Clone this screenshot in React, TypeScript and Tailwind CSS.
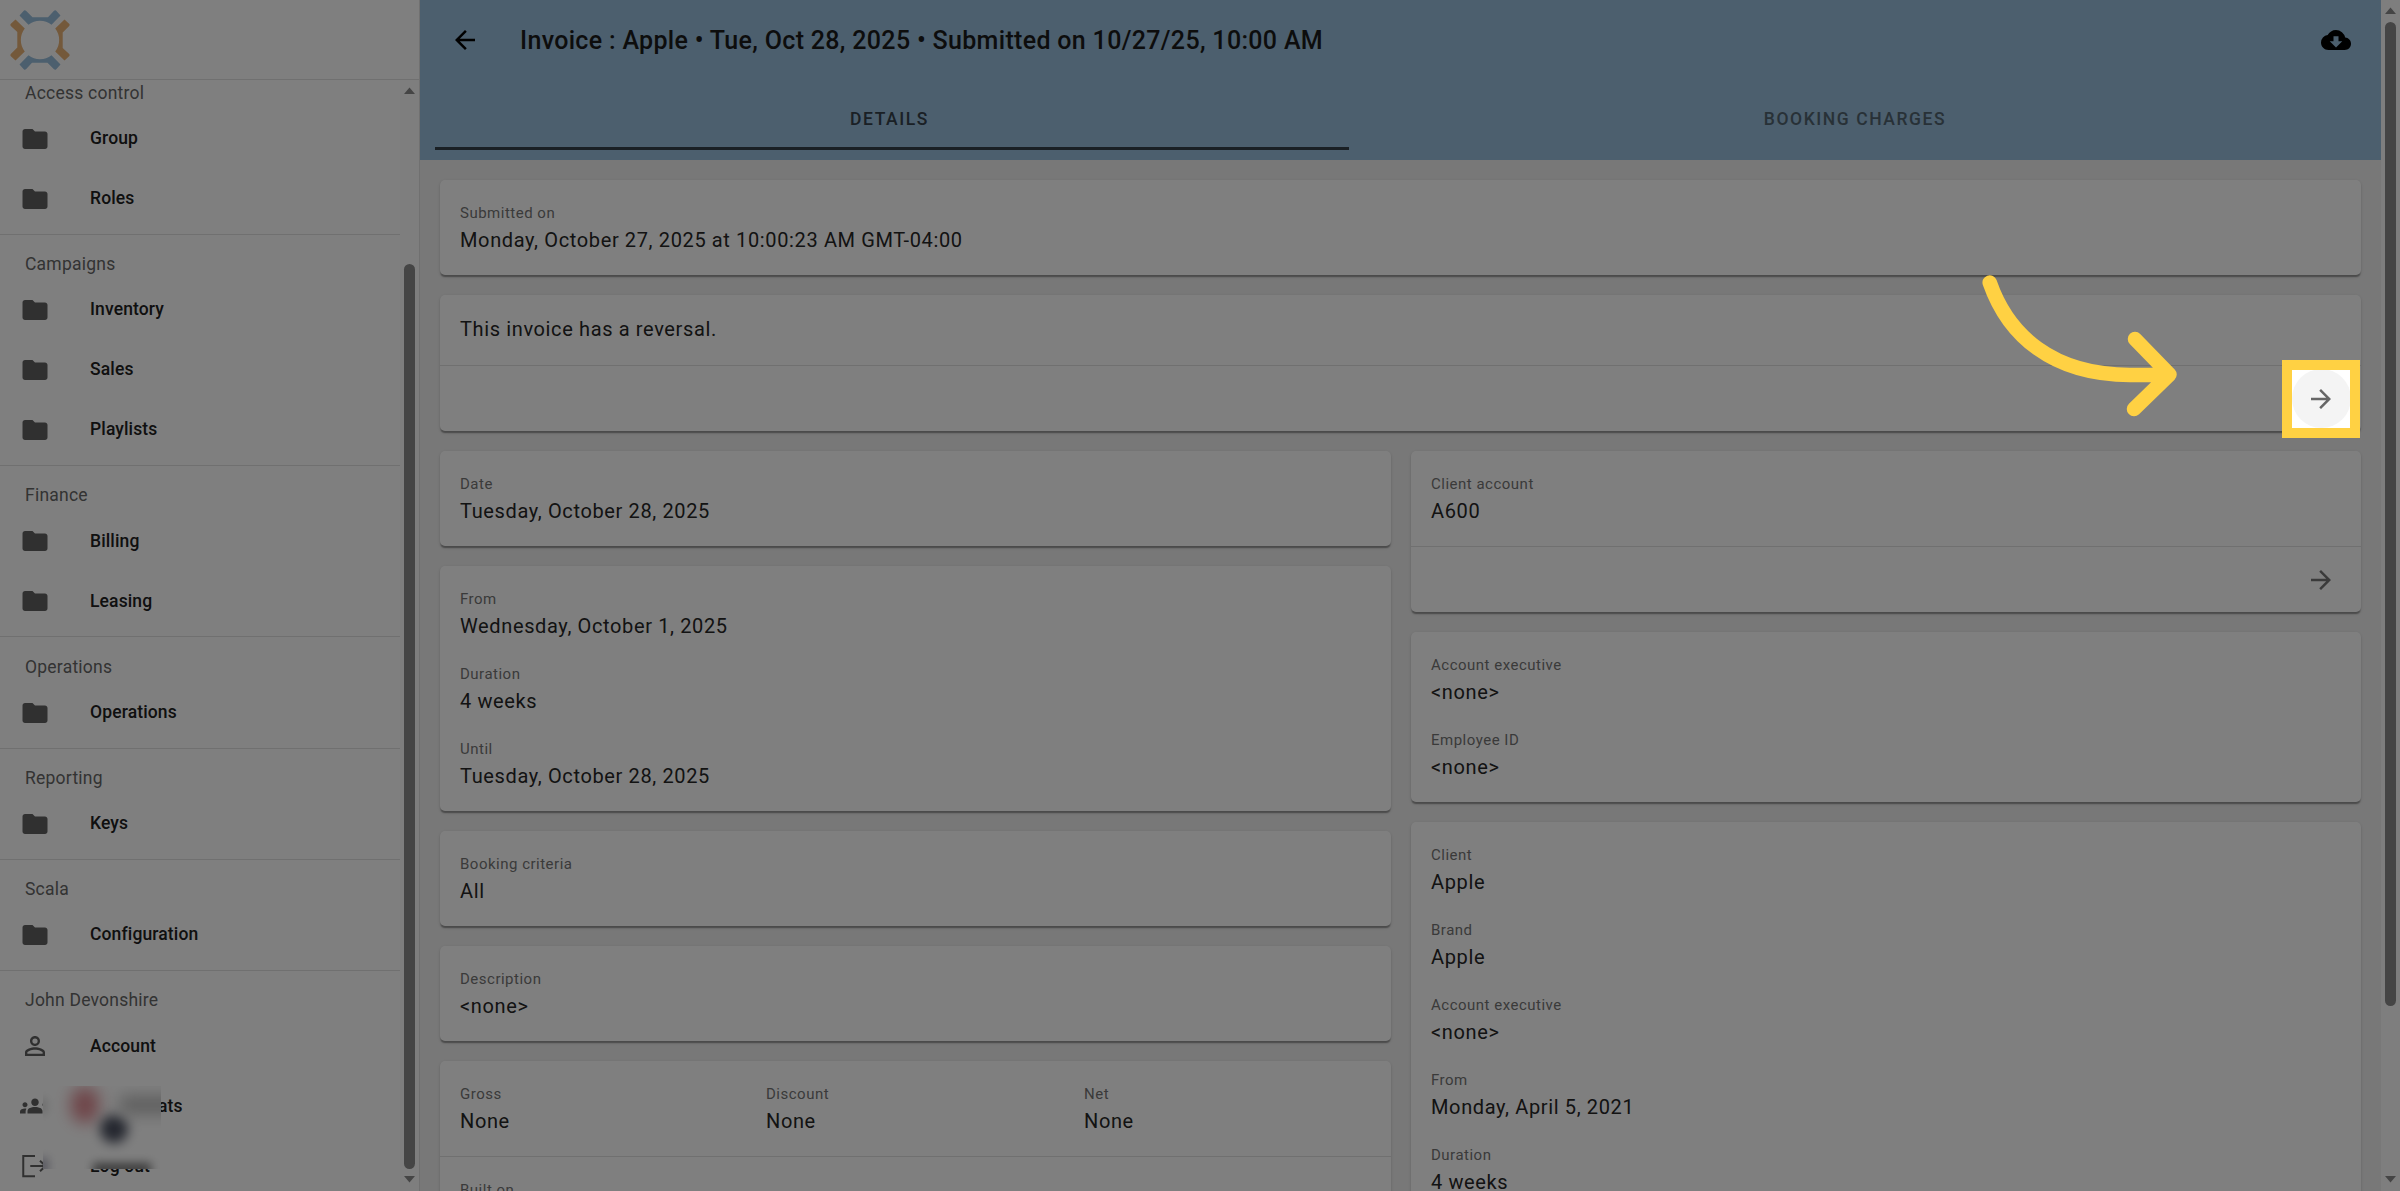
import React from "react";
import { MdFolder, MdArrowBack, MdArrowForward, MdCloudDownload, MdGroups, MdPersonOutline } from "react-icons/md";

const label = "pt-px text-[15px] leading-[25px] tracking-[0.5px] text-[#757575]";
const value = "text-[20px] leading-[30px] tracking-[0.63px] text-[#262626]";

function Field({ name, children, className = "" }: { name: string; children: React.ReactNode; className?: string }) {
  return (
    <div className={`h-[55px] whitespace-nowrap ${className}`}>
      <div className={label}>{name}</div>
      <div className={`-mt-px ${value}`}>{children}</div>
    </div>
  );
}

function Card({ children, className = "" }: { children: React.ReactNode; className?: string }) {
  return (
    <div
      className={`shrink-0 rounded-[5px] bg-white shadow-[0_2.5px_1.25px_-1.25px_rgba(0,0,0,0.2),0_1.25px_1.25px_rgba(0,0,0,0.14),0_1.25px_3.75px_rgba(0,0,0,0.12)] ${className}`}
    >
      {children}
    </div>
  );
}

function Fields({ items, className = "" }: { items: [string, string][]; className?: string }) {
  return (
    <div className={`flex flex-col gap-5 px-5 pt-5 pb-5 ${className}`}>
      {items.map(([n, v], i) => (
        <Field key={i} name={n}>{v}</Field>
      ))}
    </div>
  );
}

function itemIcon(t: string) {
  if (t === "Account") return <MdPersonOutline size={30} />;
  if (t === "Log out") return <LogoutIcon />;
  if (t === "ats") return <MdGroups size={30} />;
  return <MdFolder size={30} />;
}

function Section({ title, items, last = false }: { title: string; items: string[]; last?: boolean }) {
  return (
    <div className={last ? "pt-[14.25px]" : "border-b border-[#e0e0e0] pt-[14.25px] pb-[5.5px]"}>
      <div className="h-[30.5px] pl-[25px] text-[17.5px] leading-[30px] tracking-[0.23px] text-[#666]">{title}</div>
      {items.map((t) => (
        <div key={t} className="flex h-[60px] items-center pl-5 text-[17.5px] font-medium tracking-[0.13px] text-[#212121]">
          <span className="flex w-[70px] shrink-0 pt-px text-[#616161]">{itemIcon(t)}</span>
          <span className={t === "ats" ? "pl-[68px]" : ""}>{t}</span>
        </div>
      ))}
    </div>
  );
}

function LogoutIcon() {
  return (
    <svg width="30" height="30" viewBox="0 0 24 24" fill="none" stroke="currentColor" strokeWidth="1.6">
      <path d="M12 3.900H2.600v16.200H12M8.200 12h12M16 7.800l4.500 4.200-4.500 4.200" />
    </svg>
  );
}

const arm = "M9.500 5.500 14 .6Q15 0 16 .8L22.500 7.300H38L44 .8Q45 0 46 .6L50.500 5.500 41.500 14.800A18.700 18.700 0 0 0 18.500 14.800Z";

function Logo() {
  return (
    <svg className="ml-[10px] mt-[10px]" width="60" height="60" viewBox="0 0 60 60">
      <path d={arm} fill="#98bedc" />
      <path d={arm} fill="#98bedc" transform="rotate(180 30 30)" />
      <path d={arm} fill="#e9b377" transform="rotate(90 30 30)" />
      <path d={arm} fill="#e9b377" transform="rotate(270 30 30)" />
    </svg>
  );
}

function Triangle({ down = false }: { down?: boolean }) {
  return (
    <svg width="11" height="7" viewBox="0 0 11 7" fill="#8a8a8a" className="shrink-0">
      <path d={down ? "M0 0h11L5.500 6.500z" : "M0 7h11L5.500 .5z"} />
    </svg>
  );
}

export default function App() {
  return (
    <div className="relative flex h-[1191px] w-[2400px] overflow-hidden bg-[#f1f1f1] font-['Roboto',sans-serif]">
      <aside className="flex w-[420px] shrink-0 flex-col border-r border-[#e0e0e0] bg-white">
        <div className="h-20 shrink-0 border-b border-[#e0e0e0]"><Logo /></div>
        <div className="flex min-h-0 flex-1">
          <div className="w-[400px] shrink-0 overflow-hidden">
            <div className="-mt-[16.5px]">
              <Section title="Access control" items={["Group", "Roles"]} />
              <Section title="Campaigns" items={["Inventory", "Sales", "Playlists"]} />
              <Section title="Finance" items={["Billing", "Leasing"]} />
              <Section title="Operations" items={["Operations"]} />
              <Section title="Reporting" items={["Keys"]} />
              <Section title="Scala" items={["Configuration"]} />
              <Section title="John Devonshire" items={["Account", "ats", "Log out"]} last />
            </div>
          </div>
          <div className="flex w-[19px] flex-col items-center bg-[#fcfcfc] pt-[7px] pb-[8px]">
            <Triangle />
            <div className="mt-[170px] w-[11px] flex-1 rounded-full bg-[#8a8a8a]" />
            <div className="h-[7px] shrink-0" />
            <Triangle down />
          </div>
        </div>
      </aside>

      <main className="flex w-[1961px] shrink-0 flex-col">
        <header className="h-40 shrink-0 bg-[#98bedc]">
          <div className="flex h-20 items-center pl-[30px] pr-[30px]">
            <MdArrowBack size={30} className="text-black" />
            <h1 className="ml-10 flex-1 pt-[2px] text-[25px] leading-10 font-medium tracking-[0.32px] text-[#1a1a1a]">
              Invoice : Apple • Tue, Oct 28, 2025 • Submitted on 10/27/25, 10:00 AM
            </h1>
            <MdCloudDownload size={30} className="text-black" />
          </div>
          <div className="flex px-[15px] text-center text-[17.5px] font-medium tracking-[1.56px]">
            <div className="h-[70px] w-[914px] border-b-[3px] border-[#34404a] pr-[5px] leading-[78px] text-[#34404a]">DETAILS</div>
            <div className="flex-1 pr-[5px] leading-[78px] text-[#50636f]">BOOKING CHARGES</div>
          </div>
        </header>

        <div className="flex flex-col gap-5 p-5">
          <Card><Fields items={[["Submitted on", "Monday, October 27, 2025 at 10:00:23 AM GMT-04:00"]]} /></Card>
          <Card>
            <div className={`h-[70px] px-5 pt-[19px] ${value}`}>This invoice has a reversal.</div>
            <div className="flex h-[66px] items-center justify-end border-t border-[#e0e0e0] pr-[25px] text-[#757575]">
              <MdArrowForward size={30} />
            </div>
          </Card>
          <div className="flex items-start gap-5">
            <div className="flex w-[951px] flex-col gap-5">
              <Card><Fields items={[["Date", "Tuesday, October 28, 2025"]]} /></Card>
              <Card><Fields items={[["From", "Wednesday, October 1, 2025"], ["Duration", "4 weeks"], ["Until", "Tuesday, October 28, 2025"]]} /></Card>
              <Card><Fields items={[["Booking criteria", "All"]]} /></Card>
              <Card><Fields items={[["Description", "<none>"]]} /></Card>
              <Card>
                <div className="flex h-[95px] px-5 pt-5">
                  <Field name="Gross" className="w-[306px]">None</Field>
                  <Field name="Discount" className="w-[318px]">None</Field>
                  <Field name="Net">None</Field>
                </div>
                <Fields className="border-t border-[#e0e0e0]" items={[["Built on", "Monday, October 27, 2025"]]} />
              </Card>
            </div>
            <div className="flex w-[950px] flex-col gap-5">
              <Card>
                <Fields items={[["Client account", "A600"]]} />
                <div className="flex h-[66px] items-center justify-end border-t border-[#e0e0e0] pr-[25px] text-[#757575]">
                  <MdArrowForward size={30} />
                </div>
              </Card>
              <Card><Fields items={[["Account executive", "<none>"], ["Employee ID", "<none>"]]} /></Card>
              <Card>
                <Fields items={[["Client", "Apple"], ["Brand", "Apple"], ["Account executive", "<none>"], ["From", "Monday, April 5, 2021"], ["Duration", "4 weeks"]]} />
              </Card>
            </div>
          </div>
        </div>
      </main>

      <div className="flex flex-1 flex-col items-center bg-[#fcfcfc] pt-[7px] pb-[8px]">
        <Triangle />
        <div className="mt-[8px] h-[984px] w-[11px] rounded-full bg-[#8a8a8a]" />
        <div className="flex-1" />
        <Triangle down />
      </div>

      <div className="absolute left-[43px] top-[1086px] h-[83px] w-[118px] overflow-hidden bg-white">
        <div className="absolute left-[28px] top-px h-[36px] w-[28px] rounded-full bg-[#d4656f] opacity-75 blur-[8px]" />
        <div className="absolute left-[57px] top-[29px] h-[28px] w-[28px] rounded-full bg-[#4b5060] blur-[6px]" />
        <div className="absolute left-[77px] top-[10px] h-[18px] w-[60px] bg-[#bcbcbc] blur-[8px]" />
        <div className="absolute left-[50px] top-[77px] h-[12px] w-[58px] bg-[#777] blur-[5px]" />
        <div className="absolute -left-[6px] top-[12px] h-[16px] w-[10px] bg-[#ddd] blur-[4px]" />
        <div className="absolute -left-[6px] top-[72px] h-[16px] w-[11px] bg-[#aab] blur-[5px]" />
      </div>

      <div className="absolute left-[2282px] top-[360px] flex h-[78px] w-[78px] items-center justify-center overflow-hidden bg-white">
        <div className="absolute left-[10px] top-[9px] size-[59px] rounded-full bg-[#f4f4f4]" />
        <MdArrowForward size={30} className="relative text-[#666]" />
      </div>
      <div className="absolute left-[2282px] top-[360px] h-[78px] w-[78px] border-[10px] border-[#ffd143] shadow-[0_0_0_2600px_rgba(0,0,0,0.5)]" />
      <svg className="absolute left-[1970px] top-[260px]" width="220" height="170" viewBox="1970 260 220 170" fill="none" stroke="#ffd143" strokeWidth="14.500" strokeLinecap="round" strokeLinejoin="round">
        <path d="M1989.700 282.500C2008 335 2052 375 2130 375Q2150 375 2169 374.500M2135 339l34.500 35.500L2134 409" />
      </svg>
    </div>
  );
}
